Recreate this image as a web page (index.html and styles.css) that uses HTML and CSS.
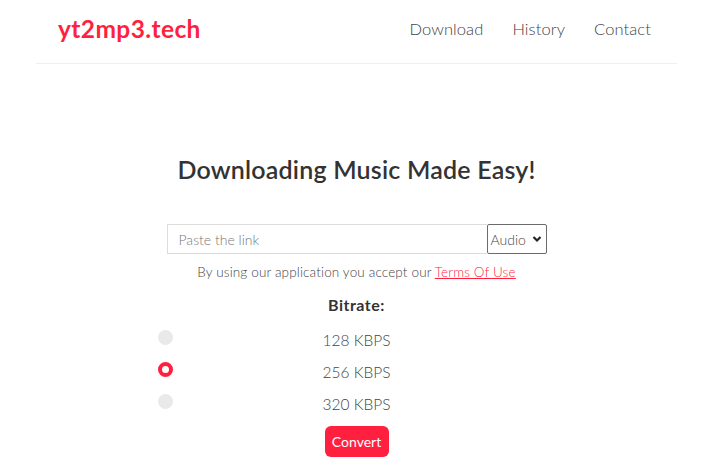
FILE: index.html
```html
<!DOCTYPE html>
<html lang="en">
<head>
<meta charset="utf-8">
<title>yt2mp3.tech</title>
<link rel="stylesheet" href="styles.css">
</head>
<body>
<div class="page">
  <header class="header">
    <a class="logo" href="#">yt2mp3.tech</a>
    <nav class="nav">
      <a href="#">Download</a>
      <a href="#">History</a>
      <a href="#">Contact</a>
    </nav>
  </header>
  <main class="main">
    <h1 class="title">Downloading Music Made Easy!</h1>
    <form class="form">
      <div class="field">
        <input class="link-input" type="text" placeholder="Paste the link">
        <div class="select">
          <span>Audio</span>
          <svg width="10" height="8" viewBox="0 0 10 8"><path d="M1.5 2 L5 5.5 L8.5 2" fill="none" stroke="#222" stroke-width="2.2"/></svg>
        </div>
      </div>
      <p class="terms">By using our application you accept our <a href="#">Terms Of Use</a></p>
      <p class="bitrate">Bitrate:</p>
      <div class="options">
        <div class="option"><span class="radio"></span><span class="label">128 KBPS</span></div>
        <div class="option"><span class="radio checked"></span><span class="label">256 KBPS</span></div>
        <div class="option"><span class="radio"></span><span class="label">320 KBPS</span></div>
      </div>
      <button class="convert" type="button">Convert</button>
    </form>
  </main>
</div>
</body>
</html>
```
FILE: styles.css
```css
* { box-sizing: border-box; }
html, body { margin: 0; padding: 0; background: #fff; }
body {
  font-family: Lato, "Noto Sans", sans-serif;
  color: #555;
}
.page {
  width: 713px;
}
.header {
  width: 641px;
  margin: 0 auto;
  height: 64px;
  border-bottom: 1px solid #efefef;
  display: flex;
  align-items: center;
  justify-content: space-between;
  padding: 0 26px 6px 22px;
}
.logo {
  color: #ff1f3e;
  font-size: 24.5px;
  font-weight: 700;
  text-decoration: none;
  letter-spacing: 0.4px;
}
.nav {
  display: flex;
  gap: 29px;
}
.nav a {
  color: #444;
  text-decoration: none;
  font-size: 16.5px;
  font-weight: 300;
  letter-spacing: 0.1px;
}
.main {
  display: flex;
  flex-direction: column;
  align-items: center;
}
.title {
  margin: 90px 0 0;
  font-size: 25px;
  line-height: 30px;
  font-weight: 600;
  letter-spacing: 0.2px;
  color: #333;
}
.form {
  display: flex;
  flex-direction: column;
  align-items: center;
  margin-top: 40px;
}
.field {
  display: flex;
  width: 380px;
  height: 30px;
}
.link-input {
  width: 320px;
  height: 30px;
  border: 1px solid #dcdcdc;
  border-right: none;
  padding: 0 11px;
  font-family: inherit;
  font-size: 14px;
  font-weight: 300;
  color: #555;
  outline: none;
}
.link-input::placeholder { color: #777; }
.select {
  width: 60px;
  height: 30px;
  border: 1px solid #6b6b6b;
  border-radius: 2px;
  display: flex;
  align-items: center;
  justify-content: space-between;
  padding: 0 4px 0 3px;
  font-size: 14px;
  font-weight: 300;
  color: #444;
}
.terms {
  margin: 9px 0 0;
  font-size: 13.5px;
  line-height: 18px;
  letter-spacing: 0.15px;
  font-weight: 300;
  color: #444;
}
.terms a { color: #ff1f3e; }
.bitrate {
  margin: 14px 0 0;
  font-size: 16px;
  line-height: 20px;
  font-weight: 700;
  letter-spacing: 0.5px;
  color: #333;
}
.options {
  margin-top: 9px;
  width: 400px;
  display: flex;
  flex-direction: column;
}
.option {
  height: 32px;
  display: grid;
  grid-template-columns: 16px 1fr 16px;
  align-items: center;
}
.radio {
  width: 15px;
  height: 15px;
  border-radius: 50%;
  background: #e9e9e9;
  margin-top: -6px;
  margin-left: 1px;
}
.radio.checked {
  background: #fff;
  border: 4px solid #ff1f3e;
}
.label {
  text-align: center;
  font-size: 15.5px;
  font-weight: 300;
  color: #444;
}
.convert {
  margin-top: 6px;
  width: 64px;
  height: 31px;
  border: none;
  border-radius: 6px;
  background: #ff1f3e;
  color: #fff;
  font-family: inherit;
  font-size: 14px;
  padding: 0;
}
```
